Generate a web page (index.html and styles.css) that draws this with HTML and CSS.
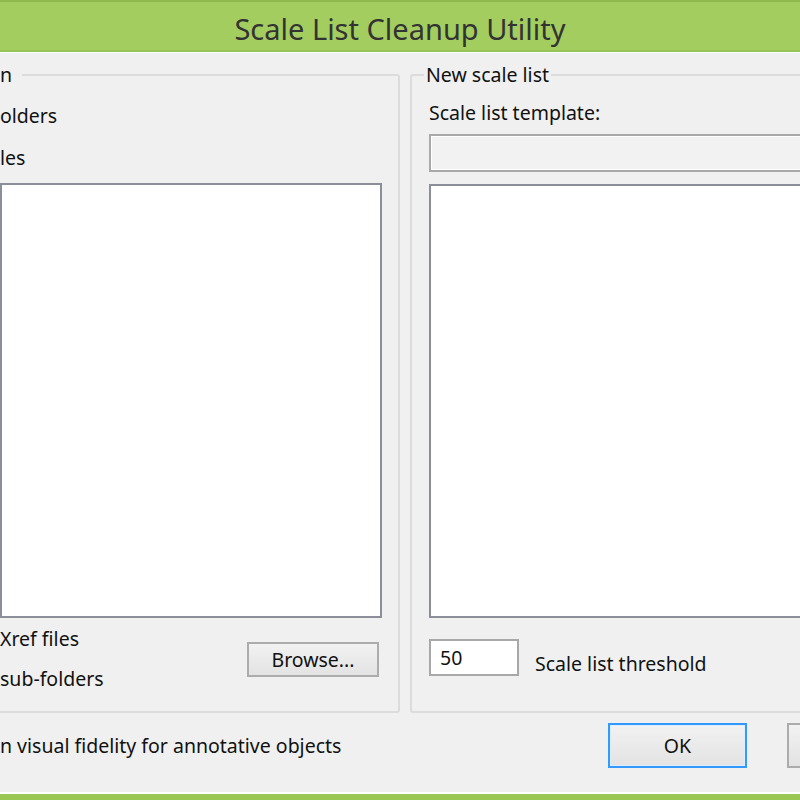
FILE: index.html
```html
<!DOCTYPE html>
<html lang="en">
<head>
    <meta charset="UTF-8">
    <title>Scale List Cleanup Utility</title>
    <link rel="stylesheet" href="styles.css">
</head>
<body>

    <!-- Window caption -->
    <div class="titlebar">Scale List Cleanup Utility</div>

    <div class="dialog">
        <div class="groups">

            <!-- Drawing selection (cut off on the left) -->
            <fieldset class="group group-left">
                <legend>n</legend>
                <div class="opt first">olders</div>
                <div class="opt">les</div>
                <div class="listbox"></div>
                <div class="opt-row">
                    <div class="opt-col">
                        <div class="opt">Xref files</div>
                        <div class="opt">sub-folders</div>
                    </div>
                    <button class="btn">Browse...</button>
                </div>
            </fieldset>

            <!-- New scale list -->
            <fieldset class="group group-right">
                <legend>New scale list</legend>
                <div class="label">Scale list template:</div>
                <div class="combo"></div>
                <div class="listbox"></div>
                <div class="threshold">
                    <input class="textbox" type="text" value="50">
                    <span class="threshold-label">Scale list threshold</span>
                </div>
            </fieldset>
        </div>

        <!-- Footer -->
        <div class="footer">
            <span class="opt">n visual fidelity for annotative objects</span>
            <button class="btn btn-default">OK</button>
            <button class="btn" aria-label="Cancel"></button>
        </div>
    </div>

    <div class="bottom-edge"></div>

</body>
</html>
```

FILE: styles.css
```css
/* General Styles */
html, body {
    margin: 0;
    width: 800px;
    height: 800px;
    overflow: hidden;
}

body {
    background: #f0f0f0;
    font-family: "Noto Sans", "Open Sans", sans-serif;
    font-size: 19.5px;
    color: #111;
    display: flex;
    flex-direction: column;
}

/* Caption bar */
.titlebar {
    height: 48px;
    line-height: 53px;
    overflow: hidden;
    background: #a3cd5f;
    border-top: 2px solid #8fb94c;
    border-bottom: 2px solid #98c356;
    box-shadow: 0 1px 0 #fff;
    text-align: center;
    font-size: 29px;
    color: #333;
}

/* Dialog body */
.dialog {
    width: 940px;
}

.groups {
    display: flex;
    gap: 10px;
    margin-top: 10px;
}

/* Group boxes */
.group {
    margin: 0;
    border: 2px solid #dcdcdc;
    border-radius: 3px;
    padding: 0 16px 17px 20px;
    min-width: 0;
}

.group legend {
    line-height: 26px;
    padding: 0 6px;
}

.group-left {
    width: 422px;
    box-sizing: border-box;
    margin-left: -22px;
}

.group-left legend {
    padding: 0 10px 0 0;
}

.group-right {
    flex: 1;
    padding: 0 0 34px 17px;
}

.group-right legend {
    margin-left: -5px;
    padding: 0 2px;
}

/* Checkbox texts (boxes are off screen) */
.opt {
    line-height: 26px;
    white-space: nowrap;
}

.opt.first {
    margin-top: 15px;
}

.opt + .opt {
    margin-top: 16px;
}

.label {
    line-height: 26px;
    margin-top: 12px;
}

/* Lists and inputs */
.listbox {
    background: #fff;
    border: 2px solid #8a8f99;
    height: 431px;
    margin-top: 12px;
}

.group-right .listbox {
    height: 430px;
}

.combo {
    height: 34px;
    margin-top: 8px;
    background: #f2f2f2;
    border: 2px solid #a9a9a9;
    box-shadow: inset 0 0 0 1px #fff;
}

.opt-row {
    display: flex;
    align-items: center;
    justify-content: space-between;
    margin-top: 8px;
}

.opt-row .btn {
    margin-right: 3px;
}

.opt-col .opt + .opt {
    margin-top: 14px;
}

.threshold {
    display: flex;
    align-items: center;
    margin-top: 20px;
}

.textbox {
    width: 73px;
    height: 33px;
    box-sizing: content-box;
    padding: 0 4px 0 9px;
    margin: 0;
    border: 2px solid #a8a8a8;
    background: #fff;
    font: inherit;
    color: #111;
}

.threshold-label {
    margin-left: 16px;
    margin-top: 12px;
}

/* Buttons */
.btn {
    width: 132px;
    height: 35px;
    box-sizing: border-box;
    border: 2px solid #acacac;
    background: linear-gradient(#f2f2f2, #e3e3e3);
    font: inherit;
    color: #111;
    padding: 0;
}

.footer {
    display: flex;
    align-items: center;
    gap: 40px;
    margin-top: 10px;
    padding-right: 14px;
}

.footer .opt {
    flex: 1;
}

.footer .btn {
    width: 139px;
    height: 45px;
}

.btn-default {
    border-color: #3399ff;
    box-shadow: inset 0 0 0 1px #ddefff;
}

/* Bottom window edge */
.bottom-edge {
    margin-top: auto;
    height: 6px;
    background: #9bc855;
    border-top: 2px solid #fff;
}
```
